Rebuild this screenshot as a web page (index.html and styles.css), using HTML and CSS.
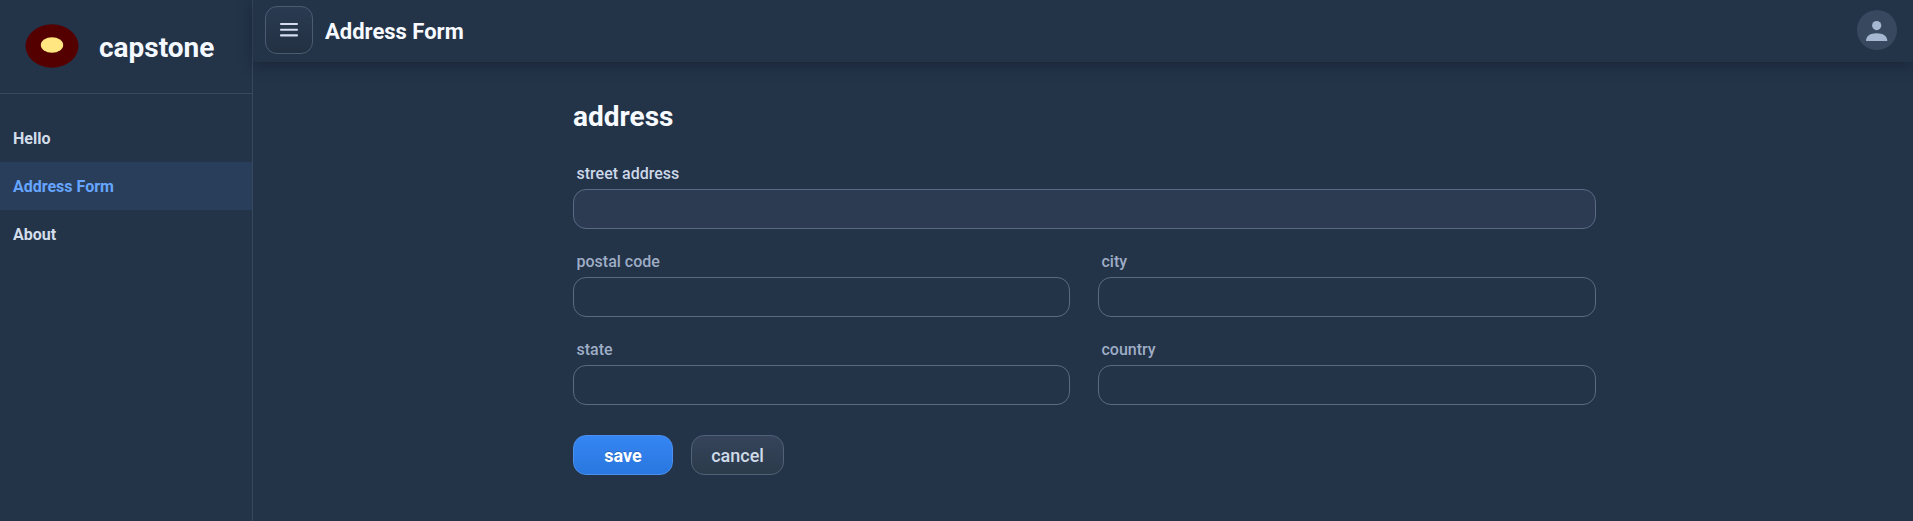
FILE: index.html
```html
<!DOCTYPE html>
<html lang="en">
<head>
<meta charset="utf-8">
<title>Address Form</title>
<link rel="stylesheet" href="styles.css">
</head>
<body>
<div class="app">
  <aside class="drawer">
    <div class="brand">
      <svg class="logo" width="54" height="44" viewBox="0 0 54 44"><ellipse cx="27" cy="22" rx="26.5" ry="21.7" fill="#550000"/><ellipse cx="27" cy="21" rx="11.2" ry="7.8" fill="#ffe680"/></svg>
      <span class="brand-name">capstone</span>
    </div>
    <nav class="tabs">
      <a class="tab">Hello</a>
      <a class="tab active">Address Form</a>
      <a class="tab">About</a>
    </nav>
  </aside>
  <div class="main">
    <header class="navbar">
      <button class="toggle" aria-label="Menu"><svg width="20" height="16" viewBox="0 0 20 16"><path d="M2 3H18M2 8.7H18M2 14.4H18" stroke="#d3ddef" stroke-width="2.1" stroke-linecap="round"/></svg></button>
      <h1 class="view-title">Address Form</h1>
      <svg class="avatar" width="40" height="40" viewBox="0 0 40 40"><circle cx="20" cy="20" r="20" fill="#38495f"/><circle cx="19.7" cy="15.6" r="4.6" fill="#a6b7d1"/><path d="M9 31C9 26 13.2 23.3 19.6 23.3S30.300 26 30.300 31Z" fill="#a6b7d1"/></svg>
    </header>
    <main class="content">
      <h3 class="form-title">address</h3>
      <form class="form">
        <label class="field wide hover"><span class="label">street address</span><input class="input" type="text"></label>
        <label class="field"><span class="label">postal code</span><input class="input" type="text"></label>
        <label class="field"><span class="label">city</span><input class="input" type="text"></label>
        <label class="field"><span class="label">state</span><input class="input" type="text"></label>
        <label class="field"><span class="label">country</span><input class="input" type="text"></label>
      </form>
      <div class="actions">
        <button class="button primary">save</button>
        <button class="button">cancel</button>
      </div>
    </main>
  </div>
</div>
</body>
</html>
```
FILE: styles.css
```css
* { box-sizing: border-box; }
body {
  margin: 0;
  background: #233348;
  color: #d3ddef;
  font-family: Roboto, "Liberation Sans", sans-serif;
  font-size: 16px;
}
.app { display: flex; height: 521px; overflow: hidden; }
.drawer { width: 253px; flex: none; border-right: 1px solid #38485f; }
.brand {
  display: flex;
  align-items: flex-start;
  height: 94px;
  padding: 24px 0 0 25px;
  border-bottom: 1px solid #38485f;
}
.logo { flex: none; }
.brand-name {
  margin: 6px 0 0 20px;
  color: #f4f8ff;
  font-size: 28px;
  line-height: 36px;
  font-weight: 700;
}
.tabs { padding-top: 20px; }
.tab {
  display: flex;
  align-items: center;
  height: 48px;
  padding-left: 13px;
  color: #d3ddea;
  font-weight: 700;
}
.active { background: #293e5b; color: #66a5ff; }
.main { flex: 1; min-width: 0; }
.navbar {
  display: flex;
  align-items: center;
  height: 62px;
  padding: 0 16px 2px 12px;
  box-shadow: 0 3px 12px -1px rgba(12, 22, 32, 0.5);
}
.toggle {
  display: flex;
  align-items: center;
  justify-content: center;
  width: 48px;
  height: 48px;
  padding: 0 0 3px;
  border: 1px solid #4b5b72;
  border-radius: 12px;
  background: linear-gradient(#2a3a51, #223142);
}
.view-title {
  margin: 3px auto 0 12px;
  color: #f7faff;
  font-size: 22px;
  line-height: 28px;
  font-weight: 700;
}
.content { width: 1023px; margin: 0 0 0 320px; padding-top: 37px; }
.form-title {
  margin: 0;
  color: #f7faff;
  font-size: 28px;
  line-height: 36px;
  font-weight: 700;
}
.form {
  display: grid;
  grid-template-columns: 497px 498px;
  column-gap: 28px;
  row-gap: 22px;
  margin-top: 28px;
}
.wide { grid-column: span 2; }
.field { display: block; height: 66px; }
.label {
  display: block;
  height: 26px;
  padding-left: 3.5px;
  line-height: 21px;
  font-weight: 500;
  color: #9eadc5;
}
.input {
  display: block;
  width: 100%;
  height: 40px;
  padding: 0 10px;
  border: 1px solid #5a6a83;
  border-radius: 13px;
  background: transparent;
  color: inherit;
  font: inherit;
}
.hover .label { color: #ccd7e8; }
.hover .input { background: #2c3b52; }
.actions { display: flex; gap: 18px; margin-top: 30px; }
.button {
  width: 93px;
  height: 40px;
  padding: 0;
  border: 1px solid #506178;
  border-radius: 13px;
  background: linear-gradient(#35445a, #2b3b4b);
  color: #d0dbe9;
  font: 500 18px Roboto, sans-serif;
}
.primary {
  width: 100px;
  border-color: #4c90ef;
  background: linear-gradient(#3585f3, #2977df);
  color: #fff;
  font-weight: 700;
  text-shadow: 0 -1px 0 rgba(20, 50, 110, 0.35);
}
```
